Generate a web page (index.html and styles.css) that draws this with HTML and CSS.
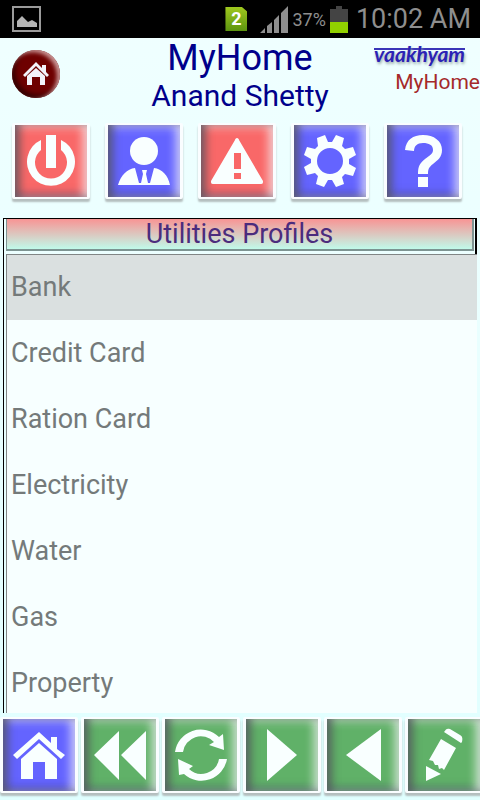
FILE: index.html
```html
<!DOCTYPE html>
<html lang="en">
  <head>
    <meta charset="UTF-8" />
    <meta name="viewport" content="width=device-width, initial-scale=1.0" />
    <title>MyHome</title>
    <link rel="stylesheet" href="styles.css">
  </head>
  <body>
    <div class="status-bar">
      <svg class="status-picture" width="29" height="26" viewBox="0 0 29 26">
        <rect x="1" y="1" width="27" height="24" fill="none" stroke="#9b9b9b" stroke-width="2" />
        <path d="M5 21v-6l5-5 6 6 4-2 5 3v4z" fill="#b5b5b5" />
      </svg>
      <div class="status-icons">
        <span class="sim">2</span>
        <svg class="signal" width="28" height="27" viewBox="0 0 28 27">
          <path d="M0 27l5-5v5zM7 27v-7l5-4v11zM14 27v-13l5-5v18zM21 27V7l7-7v27z" fill="#8e8e8e" />
        </svg>
        <span class="percent">37%</span>
        <svg class="battery" width="18" height="27" viewBox="0 0 18 27">
          <path d="M0 3h6V0h6v3h6v24H0z" fill="#444" />
          <path d="M0 16h18v11H0z" fill="#91d000" />
        </svg>
        <span class="clock">10:02 AM</span>
      </div>
    </div>

    <header class="header">
      <button class="home-round" aria-label="Home">
        <svg width="26" height="24" viewBox="0 0 26 24" fill="#f3f3fa">
          <path d="M13 0l6 6V3h4v7l3 3-2 2L13 4 2 15l-2-2z" />
          <path d="M13 6l9 8v9h-5v-8H9v8H4v-9z" />
        </svg>
      </button>
      <div class="titles">
        <h1>MyHome</h1>
        <h2>Anand Shetty</h2>
      </div>
      <div class="brand">
        <span class="logo">vaakhyam</span>
        <span class="brand-name">MyHome</span>
      </div>
    </header>

    <nav class="top-nav">
      <button class="tile red" aria-label="Log out">
        <svg viewBox="0 0 72 72">
          <path d="M26 15v10a16 16 0 1 0 20 0V15a24 24 0 1 1-20 0z" />
          <path d="M31 10h10v33H31z" />
        </svg>
      </button>
      <button class="tile blue" aria-label="Profile">
        <svg viewBox="0 0 72 72">
          <circle cx="36" cy="26" r="14" />
          <path d="M10 60c3-10 9-16 17-17l4 15h2l2-9-1-4h5l-1 4 2 9h2l4-15c8 1 14 7 16 17z" />
        </svg>
      </button>
      <button class="tile red" aria-label="Alerts">
        <svg viewBox="0 0 72 72">
          <path fill-rule="evenodd" d="M36 13c1 0 2 1 2 2l24 41c0 2 0 3-2 3H12c-2 0-2-1-2-3l24-41c0-1 1-2 2-2zM33 28v16h7V28zM33 48v6h7v-6z" />
        </svg>
      </button>
      <button class="tile blue" aria-label="Settings">
        <svg viewBox="0 0 72 72">
          <path fill-rule="evenodd" d="M23 13l8-3 3 7h4l4-7 8 3-2 8 3 3 8-2 3 8-7 4v5l7 4-3 8-8-2-3 3 2 7-8 3-4-7h-4l-4 7-8-3 2-8-3-3-8 2-3-8 7-4v-4l-7-4 3-8 8 2 3-3zM36 23a13 13 0 1 0 0 26 13 13 0 0 0 0-26z" />
        </svg>
      </button>
      <button class="tile blue" aria-label="Help">
        <svg viewBox="0 0 72 72">
          <path d="M18 25c1-10 8-15 18-15 11 0 19 6 19 15 0 7-4 10-9 14-4 3-5 5-5 10H31c0-8 2-11 7-15 5-4 8-5 8-9 0-5-4-7-10-7s-9 3-9 8z" />
          <path d="M31 52h10v10H31z" />
        </svg>
      </button>
    </nav>

    <main class="panel">
      <div class="panel-head">
        <h3 class="panel-title">Utilities Profiles</h3>
      </div>
      <ul class="list">
        <li><a href="#bank" class="item active">Bank</a></li>
        <li><a href="#credit-card" class="item">Credit Card</a></li>
        <li><a href="#ration-card" class="item">Ration Card</a></li>
        <li><a href="#electricity" class="item">Electricity</a></li>
        <li><a href="#water" class="item">Water</a></li>
        <li><a href="#gas" class="item">Gas</a></li>
        <li><a href="#property" class="item">Property</a></li>
      </ul>
    </main>

    <nav class="bottom-nav">
      <button class="tile blue" aria-label="Home">
        <svg viewBox="0 0 72 72">
          <path d="M36 13l12 11v-6h6v12l8 6-4 4-22-20-22 20-4-4z" />
          <path d="M36 24l18 16v20H42V43H30v17H18V40z" />
        </svg>
      </button>
      <button class="tile green" aria-label="Rewind">
        <svg viewBox="0 0 72 72">
          <path d="M35 12v49L10 36zM62 12v49L37 36z" />
        </svg>
      </button>
      <button class="tile green" aria-label="Refresh">
        <svg viewBox="0 0 72 72">
          <path d="M10 33A26 26 0 0 1 54 18l4-3 1 16-15-5 5-3A18 18 0 0 0 18 33z" />
          <path d="M62 40A26 26 0 0 1 19 55l-5 1-1-16 15 7-4 3A18 18 0 0 0 54 40z" />
        </svg>
      </button>
      <button class="tile green" aria-label="Next">
        <svg viewBox="0 0 72 72">
          <path d="M21 10v52l30-26z" />
        </svg>
      </button>
      <button class="tile green" aria-label="Previous">
        <svg viewBox="0 0 72 72">
          <path d="M54 10v52L19 36z" />
        </svg>
      </button>
      <button class="tile green" aria-label="Edit">
        <svg viewBox="0 0 72 72">
          <path d="M36 13c2-3 3-4 6-3l10 6c2 1 3 3 2 7l-1 1z" />
          <path d="M33 20l15 9-12 22-2-2-3 1-1-4h-3l-2-4-4-1z" />
          <path d="M18 47l15 8-15 7z" />
        </svg>
      </button>
    </nav>
  </body>
</html>
```

FILE: styles.css
```css
* {
  box-sizing: border-box;
}
body {
  display: flex;
  flex-direction: column;
  height: 100vh;
  margin: 0;
  overflow: hidden;
  background: linear-gradient(#f0ffff, #e0ffff);
  font-family: Roboto, Arial, sans-serif;
}
h1,
h2,
h3,
ul {
  margin: 0;
  padding: 0;
  font-weight: normal;
}
button {
  padding: 0;
  cursor: pointer;
}

/* status bar */
.status-bar {
  display: flex;
  flex: none;
  align-items: center;
  justify-content: space-between;
  height: 38px;
  padding: 0 9px 0 12px;
  background: #000;
  color: #8e8e8e;
}
.status-icons {
  display: flex;
  align-items: center;
}
.sim {
  width: 22px;
  margin-right: 13px;
  background: linear-gradient(#9fc81e, #5c9410);
  clip-path: polygon(0 0, 75% 0, 100% 20%, 100% 100%, 0 100%);
  color: #fff;
  font-size: 18px;
  font-weight: bold;
  line-height: 24px;
  text-align: center;
}
.percent {
  margin: 0 4px;
  font-size: 18px;
}
.clock {
  margin-left: 8px;
  font-size: 27px;
}

/* header */
.header {
  display: grid;
  flex: none;
  grid-template-columns: 1fr auto 1fr;
  height: 85px;
}
.home-round {
  display: flex;
  align-items: center;
  justify-content: center;
  width: 48px;
  height: 48px;
  margin: 12px;
  border: 0;
  border-radius: 50%;
  background: #6e0000;
  box-shadow: inset -3px 2px 4px #c99, inset 3px -3px 5px #300;
}
.titles {
  color: #00008b;
  text-align: center;
}
.titles h1 {
  font-size: 36px;
  line-height: 40px;
}
.titles h2 {
  font-size: 30px;
  line-height: 36px;
}
.brand {
  display: flex;
  flex-direction: column;
  align-items: flex-end;
}
/* the head stroke runs along the tops of the small letters */
.logo {
  margin: 2px 15px 0 0;
  background: linear-gradient(#3a35b8, #3a35b8) no-repeat 0 8px / 100% 2px;
  color: #2b22b5;
  font-family: Lato, sans-serif;
  font-size: 21px;
  font-style: italic;
  font-weight: bold;
  line-height: 28px;
  text-shadow: 1px 2px 3px #9aa;
}
.brand-name {
  color: #a52a2a;
  font-size: 21px;
  line-height: 28px;
}

/* bevelled icon buttons */
.tile {
  flex: none;
  width: 78px;
  height: 76px;
  border: solid #fafdff;
  border-width: 2px 3px;
  border-radius: 2px;
  box-shadow: 0 3px 2px #b4bebe, inset 7px 0 9px -2px rgba(80, 80, 90, 0.75),
    inset -7px 0 9px -2px rgba(255, 255, 255, 0.6),
    inset 0 -6px 8px -2px rgba(70, 70, 110, 0.45),
    inset 0 7px 9px -3px rgba(255, 255, 255, 0.35);
}
.tile svg {
  display: block;
  width: 72px;
  height: 72px;
  fill: #f9ffff;
}
.red {
  background: #f96868;
}
.blue {
  background: #6464ff;
}
.green {
  background: #60b168;
}
.top-nav {
  display: flex;
  flex: none;
  justify-content: space-between;
  padding: 0 18px 0 12px;
}

/* profile list */
.panel {
  display: flex;
  flex: 1;
  flex-direction: column;
  min-height: 0;
  margin: 19px 3px 0;
  border-left: 1px solid #000;
}
.panel-head {
  flex: none;
  padding: 0 1px 3px 2px;
  border-top: 1px solid #000;
  border-right: 2px solid #000;
}
.panel-title {
  border: solid #7d9492;
  border-width: 0 2px 2px 1px;
  background: linear-gradient(#f89494, #c0faea);
  color: #4b2c7d;
  font-size: 27px;
  line-height: 30px;
  text-align: center;
}
.list {
  flex: 1;
  min-height: 0;
  margin-left: 2px;
  overflow: hidden;
  border: solid #808585;
  border-width: 1px 0 0 1px;
  background: #f7ffff;
  list-style: none;
}
.item {
  display: block;
  padding-left: 4px;
  color: #747a7a;
  font-size: 27px;
  line-height: 66px;
  text-decoration: none;
}
.active {
  background: #dae0e0;
  line-height: 65px;
}

.bottom-nav {
  display: flex;
  flex: none;
  gap: 3px;
  padding: 4px 0 7px;
  overflow: hidden;
}
```
